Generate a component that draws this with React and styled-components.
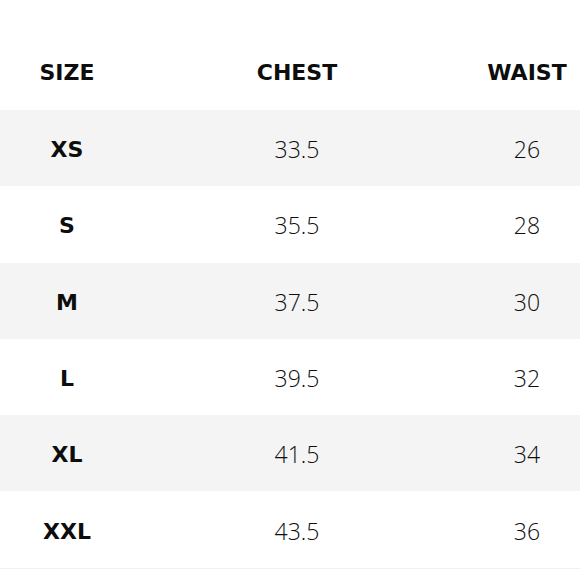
import React from 'react';
import styled, { createGlobalStyle } from 'styled-components';

const GlobalStyle = createGlobalStyle`
  body {
    margin: 0;
    background: #fff;
    overflow: hidden;
    font-family: "Open Sans", "Liberation Sans", sans-serif;
  }
`;

const Page = styled.div`
  width: 580px;
  height: 580px;
  overflow: hidden;
  padding-top: 34px;
  box-sizing: border-box;
`;

const Table = styled.div`
  width: 690px;
  margin-left: -48px;
  border-bottom: 1px solid #f0f0f0;
`;

const Row = styled.div`
  display: grid;
  grid-template-columns: repeat(3, 230px);
  height: ${(p) => (p.$head ? 76 : 76.3)}px;
  padding-top: ${(p) => (p.$head ? 0 : 3)}px;
  box-sizing: border-box;
  align-items: center;
  background: ${(p) => (p.$shade ? '#f4f4f4' : '#fff')};
`;

const Cell = styled.div`
  text-align: center;
  font-family: ${(p) =>
    p.$bold ? '"DejaVu Sans", "Open Sans", sans-serif' : '"Open Sans", "Liberation Sans", sans-serif'};
  font-size: ${(p) => (p.$bold ? 22 : 23)}px;
  color: #0d0d0d;
  font-weight: ${(p) => (p.$bold ? 700 : 300)};
  margin-top: ${(p) => (p.$bold ? 0 : -1)}px;
`;

const sizes = [
  ['XS', '33.5', '26'],
  ['S', '35.5', '28'],
  ['M', '37.5', '30'],
  ['L', '39.5', '32'],
  ['XL', '41.5', '34'],
  ['XXL', '43.5', '36'],
];

export default function App() {
  return (
    <Page>
      <GlobalStyle />
      <Table>
        <Row $head>
          <Cell $bold>SIZE</Cell>
          <Cell $bold>CHEST</Cell>
          <Cell $bold>WAIST</Cell>
        </Row>
        {sizes.map(([size, chest, waist], i) => (
          <Row key={size} $shade={i % 2 === 0}>
            <Cell $bold>{size}</Cell>
            <Cell>{chest}</Cell>
            <Cell>{waist}</Cell>
          </Row>
        ))}
      </Table>
    </Page>
  );
}
